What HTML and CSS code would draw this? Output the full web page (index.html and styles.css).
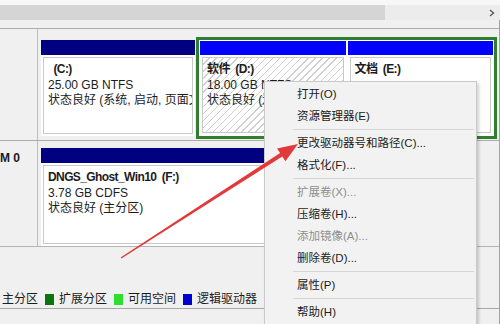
FILE: index.html
```html
<!DOCTYPE html>
<html>
<head>
    <title>磁盘管理</title>
    <link rel="stylesheet" href="styles.css">
</head>
<body>
    <div class="top-strip"></div>
    <div class="hscroll">
        <div class="thumb"></div>
        <div class="track"></div>
        <div class="scroll-btn"><svg width="8" height="8" viewBox="0 0 8 8"><polyline points="2,1 5.5,4 2,7" fill="none" stroke="#5a5a5a" stroke-width="1.4"/></svg></div>
    </div>

    <div class="main">
        <div class="disk disk0">
            <div class="disk-label"></div>
            <div class="parts">
                <div class="part primary c">
                    <div class="bar navy"></div>
                    <div class="body">
                        <div class="name">  (C:)</div>
                        <div>25.00 GB NTFS</div>
                        <div>状态良好 (系统, 启动, 页面文件, 故障转储, 主分区)</div>
                    </div>
                </div>
                <div class="extended">
                    <div class="part logical">
                        <div class="bar blue"></div>
                        <div class="body hatched">
                            <div class="name">软件  (D:)</div>
                            <div>18.00 GB NTFS</div>
                            <div>状态良好 (逻辑驱动器)</div>
                        </div>
                    </div>
                    <div class="part logical">
                        <div class="bar blue"></div>
                        <div class="body">
                            <div class="name">文档  (E:)</div>
                        </div>
                    </div>
                </div>
            </div>
        </div>

        <div class="disk disk1">
            <div class="disk-label">M 0</div>
            <div class="parts">
                <div class="part primary f">
                    <div class="bar navy"></div>
                    <div class="body">
                        <div class="name">DNGS_Ghost_Win10  (F:)</div>
                        <div>3.78 GB CDFS</div>
                        <div>状态良好 (主分区)</div>
                    </div>
                </div>
            </div>
        </div>

        <div class="legend">
            <span>主分区</span><i class="sw ext"></i>
            <span>扩展分区</span><i class="sw free"></i>
            <span>可用空间</span><i class="sw logic"></i>
            <span>逻辑驱动器</span>
        </div>
    </div>

    <div class="menu">
        <div class="item">打开(O)</div>
        <div class="item">资源管理器(E)</div>
        <div class="sep"></div>
        <div class="item">更改驱动器号和路径(C)...</div>
        <div class="item">格式化(F)...</div>
        <div class="sep"></div>
        <div class="item off">扩展卷(X)...</div>
        <div class="item">压缩卷(H)...</div>
        <div class="item off">添加镜像(A)...</div>
        <div class="item">删除卷(D)...</div>
        <div class="sep"></div>
        <div class="item">属性(P)</div>
        <div class="sep"></div>
        <div class="item">帮助(H)</div>
    </div>

    <svg class="pointer" width="500" height="324" viewBox="0 0 500 324">
        <polygon points="120.6,257.4 280.1,153.1 277,148.4 298,144 285.4,161.2 282.3,156.5 121.4,258.6" fill="#e23a3a"/>
    </svg>
</body>
</html>
```

FILE: styles.css
```css
* { box-sizing: border-box; }
body { margin: 0; width: 500px; height: 324px; overflow: hidden; position: relative; background: #f0f0f0; font-family: "Liberation Sans", "Noto Sans CJK SC", sans-serif; font-size: 12px; color: #1c1c1c; }

.top-strip { height: 5px; background: #f7f7f7; }
.hscroll { height: 15px; display: flex; background: #ececec; }
.thumb { width: 385px; background: #d5d5d5; }
.track { flex: 1; }
.scroll-btn { width: 16px; display: flex; align-items: center; justify-content: center; }

.main { height: 304px; padding-top: 8px; border-right: 1px solid #a3a3a3; }

.disk { display: flex; border-top: 1px solid #acacac; }
.disk0 { height: 112px; }
.disk1 { height: 107px; border-bottom: 1px solid #b4b4b4; }
.disk-label { width: 38px; border-right: 1px solid #bcbcbc; font-weight: bold; line-height: 16px; padding-top: 9px; white-space: nowrap; }
.parts { flex: 1; display: flex; align-items: flex-start; padding: 8px 0 0 3px; }
.disk1 .parts { padding-top: 4px; }

.part { display: flex; flex-direction: column; background: #fff; }
.primary { margin-top: 3px; height: 96px; }
.c { width: 154px; margin-right: 1px; }
.f { width: 420px; height: 98px; }
.logical { flex: 1; min-width: 0; }
.bar { height: 15px; flex: none; }
.logical .bar { height: 14px; }
.navy { background: #000080; }
.blue { background: #0000ff; }

.body { flex: 1; margin: 2px; border: 1px solid #c8c8c8; padding: 4px 0 0 4px; line-height: 15.5px; white-space: nowrap; overflow: hidden; }
.name { font-weight: bold; letter-spacing: -0.6px; white-space: pre; }
.hatched { background: repeating-linear-gradient(135deg, #fff 0, #fff 4px, #cfcfcf 4px, #cfcfcf 5px); }

.extended { width: 301px; height: 102px; border: 3px solid #2f7f2f; padding: 1px; display: flex; gap: 2px; background: #fff; }

.legend { margin-top: 44px; height: 18px; border-bottom: 1px solid #a8a8a8; display: flex; align-items: center; padding-left: 2px; line-height: 17px; }
.sw { display: block; width: 9px; height: 11px; margin: 0 5px 0 7px; }
.sw.ext { background: #0b740b; }
.sw.free { background: #2ee02e; }
.sw.logic { background: #0000d0; }

.menu { position: absolute; left: 264px; top: 81px; width: 213px; height: 250px; padding-top: 1px; background: #f2f2f2; border: 1px solid #c9c9c9; box-shadow: 2px 2px 3px rgba(0,0,0,0.18); font-size: 11.5px; }
.item { height: 22px; line-height: 22px; padding-left: 32px; white-space: nowrap; }
.item.off { color: #8e8e8e; }
.sep { height: 1px; margin: 2px 2px 2px 28px; background: #d6d6d6; }

.pointer { position: absolute; left: 0; top: 0; pointer-events: none; }
```
